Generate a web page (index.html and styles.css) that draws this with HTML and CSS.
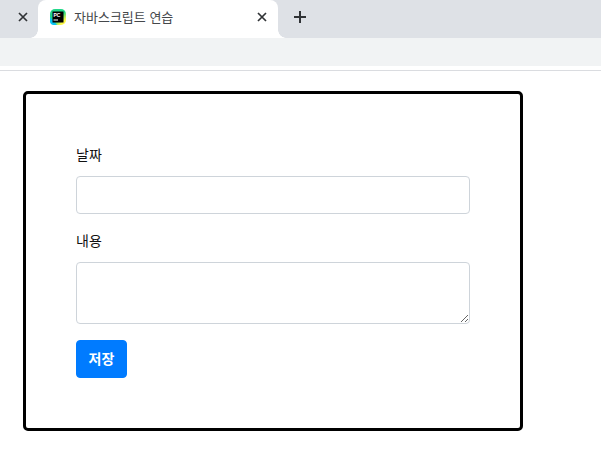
FILE: index.html
```html
<!DOCTYPE html>
<html lang="ko">
<head>
    <meta charset="UTF-8">
    <title>자바스크립트 연습</title>
    <link rel="stylesheet" href="styles.css">
</head>
<body>
    <div class="tabstrip">
        <div class="tab-prev">
            <svg class="tab-close" viewBox="0 0 10 10"><path d="M1 1L9 9M9 1L1 9"/></svg>
        </div>
        <div class="tab-active">
            <svg class="favicon" viewBox="0 0 16 16">
                <defs>
                    <linearGradient id="pc" x1="0" y1="0" x2="1" y2="1">
                        <stop offset="0" stop-color="#21d789"/>
                        <stop offset="0.55" stop-color="#21d789"/>
                        <stop offset="0.8" stop-color="#fcf84a"/>
                        <stop offset="1" stop-color="#fcf84a"/>
                    </linearGradient>
                </defs>
                <rect width="16" height="16" rx="5" fill="url(#pc)"/>
                <path d="M0 8L7 16H4Q0 16 0 12Z" fill="#07c3f2"/>
                <rect x="2.5" y="2.5" width="11" height="11" fill="#000"/>
                <text x="3.5" y="7.5" class="favicon-text">PC</text>
                <rect x="3.5" y="10.5" width="4.5" height="1" fill="#fff"/>
            </svg>
            <span class="tab-title">자바스크립트 연습</span>
            <svg class="tab-close" viewBox="0 0 10 10"><path d="M1 1L9 9M9 1L1 9"/></svg>
        </div>
        <div class="tab-rest">
            <svg class="tab-new" viewBox="0 0 12 12"><path d="M6 0V12M0 6H12"/></svg>
        </div>
    </div>
    <div class="toolbar"></div>
    <div class="bookmarks"></div>

    <div class="page">
        <form class="card">
            <div class="field">
                <label class="field-label" for="date">날짜</label>
                <input class="field-input" id="date" type="text">
            </div>
            <div class="field">
                <label class="field-label" for="body">내용</label>
                <textarea class="field-input field-area" id="body"></textarea>
            </div>
            <button class="save-btn" type="button">저장</button>
        </form>
    </div>
</body>
</html>
```
FILE: styles.css
```css
* {
    box-sizing: border-box;
}
body {
    margin: 0;
    background: #fff;
    color: #111;
    font-family: "Noto Sans CJK KR", "Noto Sans", sans-serif;
    overflow: hidden;
}
.tabstrip {
    display: flex;
    height: 38px;
    background: #dee1e6;
}
.tab-prev {
    display: flex;
    align-items: center;
    justify-content: flex-end;
    width: 38px;
    padding: 0 10px 4px 0;
}
.tab-active {
    position: relative;
    display: flex;
    align-items: center;
    width: 240px;
    padding: 0 11px 4px 12px;
    background: #fff;
    border-radius: 8px 8px 0 0;
}
.tab-active::before,
.tab-active::after {
    content: "";
    position: absolute;
    bottom: 0;
    width: 8px;
    height: 8px;
}
.tab-active::before {
    left: -8px;
    background: radial-gradient(circle at 0 0, #dee1e6 7.5px, #fff 8px);
}
.tab-active::after {
    right: -8px;
    background: radial-gradient(circle at 100% 0, #dee1e6 7.5px, #fff 8px);
}
.favicon {
    width: 16px;
    height: 16px;
    margin-right: 8px;
}
.favicon-text {
    font-family: "Liberation Sans", sans-serif;
    font-size: 5px;
    font-weight: 700;
    fill: #fff;
}
.tab-title {
    flex: 1;
    margin-top: -2px;
    font-size: 13px;
    color: #45484b;
    white-space: nowrap;
}
.tab-close {
    width: 10px;
    height: 10px;
    fill: none;
    stroke: #303336;
    stroke-width: 1.7;
}
.tab-rest {
    display: flex;
    align-items: center;
    padding: 0 0 4px 16px;
}
.tab-new {
    width: 12px;
    height: 12px;
    fill: none;
    stroke: #303336;
    stroke-width: 2;
}
.toolbar {
    height: 28px;
    background: #f1f3f4;
}
.bookmarks {
    height: 5px;
    border-bottom: 1px solid #dadce0;
}
.page {
    padding: 20px 0 0 23px;
}
.card {
    width: 500px;
    height: 340px;
    padding: 50px;
    background: #fff;
    border: 3px solid #000;
    border-radius: 5px;
}
.field {
    margin-bottom: 16px;
}
.field-label {
    display: block;
    margin-bottom: 12px;
    font-size: 14px;
    line-height: 20px;
}
.field-input {
    display: block;
    width: 100%;
    height: 38px;
    padding: 6px 12px;
    background: #fff;
    border: 1px solid #ced4da;
    border-radius: 4px;
    font: inherit;
}
.field-area {
    height: 62px;
}
.save-btn {
    display: block;
    width: 51px;
    height: 38px;
    padding: 0 0 2px;
    background: #007bff;
    border: 1px solid #007bff;
    border-radius: 4px;
    color: #fff;
    font-family: inherit;
    font-size: 14px;
    font-weight: 700;
}
```
